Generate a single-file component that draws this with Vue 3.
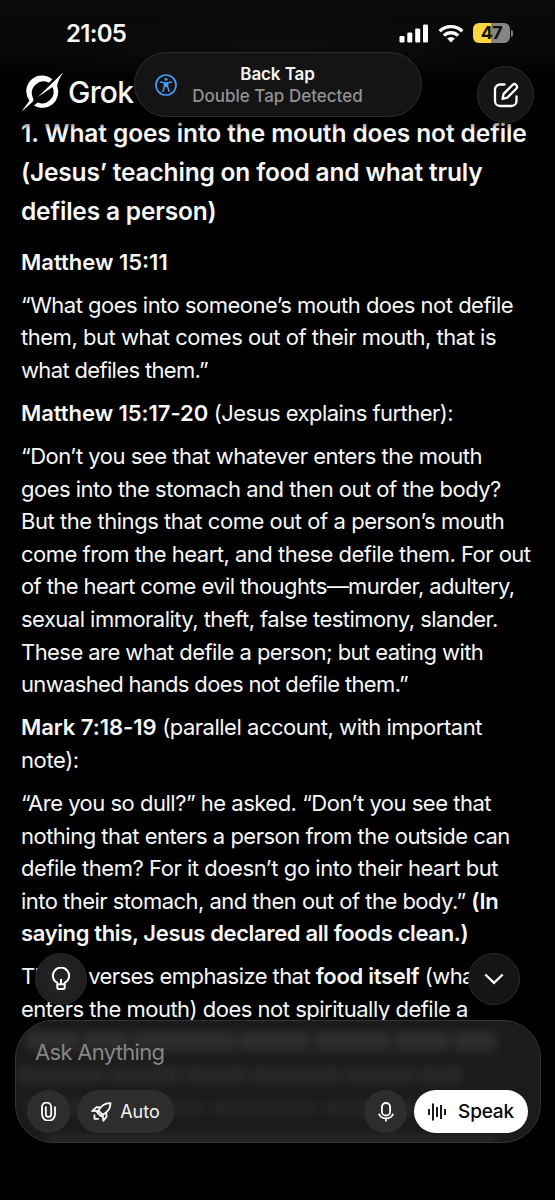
<template>
  <div class="screen">
    <!-- Conversation text -->
    <main class="article">
      <component
          :is="block.tag"
          v-for="(block, i) in blocks"
          :key="i"
          class="block"
          :class="block.tag === 'h2' ? 'heading' : 'para'"
      >
        <span v-for="(line, j) in block.lines" :key="j" class="line">
          <span
              v-for="(part, k) in line.parts"
              :key="k"
              :class="{ strong: part.bold }"
              :style="{ letterSpacing: (part.bold ? line.boldLs : line.ls) + 'px' }"
          >{{ part.text }}</span>
        </span>
      </component>
    </main>
    <div class="top-fade"></div>

    <!-- Status bar -->
    <header class="status">
      <span class="time">21:05</span>
      <div class="indicators">
        <svg class="signal" width="30" height="19" viewBox="0 0 30 19" fill="#fff">
          <rect x="0.5" y="12" width="5" height="6.5" rx="1.3"/>
          <rect x="8.3" y="8.6" width="5" height="9.9" rx="1.3"/>
          <rect x="16.2" y="4.5" width="5" height="14" rx="1.3"/>
          <rect x="24" y="0.5" width="5" height="18" rx="1.3"/>
        </svg>
        <svg class="wifi" width="26" height="19" viewBox="0 0 26 19" fill="none" stroke="#fff" stroke-width="3.4">
          <path d="M1.7 7.2a16.2 16.2 0 0 1 22.6 0"/>
          <path d="M5.9 11.6a10.2 10.2 0 0 1 14.2 0"/>
          <path d="M13 18.6l-3.9-4a5.6 5.6 0 0 1 7.8 0z" fill="#fff" stroke="none"/>
        </svg>
        <div class="battery"><span>47</span></div>
        <i class="nub"></i>
      </div>
    </header>

    <!-- Brand -->
    <div class="brand">
      <svg width="44" height="42" viewBox="0 0 44 42" fill="#fff">
        <path d="M32.4 8.4A15.8 15.8 0 0 0 9.4 29.8Q7 33 1.4 40.8L12.2 31.2Q14.2 29.300 12.900 26.800A11.6 11.6 0 0 1 28.8 11.8z"/>
        <path d="M14 34.6A16 16 0 0 0 37.200 15.200Q37 11.500 43 1.500L17.600 26.300L32.600 16A11.6 11.6 0 0 1 17.6 31.4z"/>
      </svg>
      <span>Grok</span>
    </div>

    <!-- System notification -->
    <div class="toast">
      <svg width="22" height="22" viewBox="0 0 22 22" fill="none" stroke="#459cf5" stroke-width="1.5" stroke-linecap="round">
        <circle cx="11" cy="11" r="10" stroke-width="1.7"/>
        <circle cx="11" cy="5.2" r="1.5" fill="#459cf5" stroke="none"/>
        <path d="M5.4 8l4 .8v3.6L8 17.3M16.600 8l-4 .8v3.6l1.400 4.900"/>
        <path d="M9.3 8.300h3.400v4.800H9.300z" fill="#459cf5" stroke="none"/>
      </svg>
      <div class="toast-text">
        <b>Back Tap</b>
        <span>Double Tap Detected</span>
      </div>
    </div>

    <button class="round compose">
      <svg width="28" height="28" viewBox="0 0 28 28" fill="none" stroke="#fff" stroke-width="2.3" stroke-linecap="round" stroke-linejoin="round">
        <path d="M12.5 3.5H8A5 5 0 0 0 3 8.5V20a5 5 0 0 0 5 5h11.5a5 5 0 0 0 5-5v-4.5"/>
        <path d="M10.5 17.8l1.1-4.9 8.9-8.9a2.6 2.6 0 0 1 3.7 3.7l-8.9 8.9z"/>
      </svg>
    </button>

    <button class="round bulb">
      <svg width="20" height="24" viewBox="0 0 20 24" fill="none" stroke="#fff" stroke-width="2" stroke-linejoin="round">
        <path d="M6.3 15.9A8.1 8.1 0 1 1 13.7 15.9V20.5a1.5 1.5 0 0 1-1.5 1.5H7.8a1.5 1.5 0 0 1-1.5-1.5zM6.3 17.2h7.4M10 12v5"/>
      </svg>
    </button>
    <button class="round down">
      <svg width="20" height="12" viewBox="0 0 20 12" fill="none" stroke="#fff" stroke-width="2.3">
        <path d="M1.3 1.5L10 9.8l8.7-8.3"/>
      </svg>
    </button>

    <!-- Prompt box -->
    <section class="composer">
      <!-- Soft smudges seen through the glass -->
      <svg class="glass" width="524" height="121" viewBox="0 0 524 121" fill="none" stroke="#fff">
        <path d="M10 20H480" stroke-width="20" stroke-dasharray="53 5 44 5 102 4 70 6 75 6" opacity="0.085"/>
        <path d="M2 54H446" stroke-width="17" stroke-dasharray="87 5 71 5 60 6" opacity="0.06"/>
        <path d="M10 87H400" stroke-width="16" stroke-dasharray="106 6 68 6" opacity="0.04"/>
        <path d="M30 119H480" stroke-width="7" opacity="0.09"/>
      </svg>
      <div class="placeholder">Ask Anything</div>
      <div class="actions">
        <button class="chip icon">
          <svg width="15" height="19" viewBox="0 0 15 19" fill="none" stroke="#fff" stroke-width="1.8">
            <path d="M4.8 4.5v7.7a2.7 2.7 0 0 0 5.4 0V5a4.2 4.2 0 0 0-9.2.2v7a6.5 6.5 0 0 0 13 0V4.5"/>
          </svg>
        </button>
        <button class="chip auto">
          <svg width="21" height="20" viewBox="0 0 21 20" fill="none" stroke="#fff" stroke-width="1.8" stroke-linejoin="round">
            <path d="M19.5 1.2c-5.5-.2-9.2 2-12 7.5l4.2 4.1c5.2-2.8 7.9-6.2 7.8-11.6zM9.3 5.500L5.500 5.200 1.200 9.100l6.300-.4M15.300 10.500l.2 4.300-3.100 4-.7-6M8 8.600l-1.800 1.700 4 4 1.500-1.500"/>
            <path d="M3.5 12.5v4.3h4.2"/>
          </svg>
          Auto
        </button>
        <button class="chip icon mic">
          <svg width="16" height="20" viewBox="0 0 16 20" fill="none" stroke="#fff" stroke-width="1.8">
            <rect x="3.9" y="1" width="8.2" height="12.5" rx="4.1"/>
            <path d="M1 11.7a7.1 5.7 0 0 0 14 0M8 16.2V19.5"/>
          </svg>
        </button>
        <button class="speak">
          <svg width="18" height="18" viewBox="0 0 18 18" stroke="#000" stroke-width="1.8">
            <path d="M1 6v6M5 .5v17M9 4v10M13 2v14M17 6v6"/>
          </svg>
          Speak
        </button>
      </div>
    </section>
  </div>
</template>

<script setup>
// Builds one line of text; **double stars** mark the bold run
const line = (raw, ls = -0.5, boldLs = -0.3) => ({
  ls,
  boldLs,
  parts: raw.split('**').map((text, i) => ({text, bold: i % 2 === 1})).filter(p => p.text)
})

const blocks = [
  {
    tag: 'h2',
    lines: [
      line('1. What goes into the mouth does not defile', -0.1),
      line('(Jesus’ teaching on food and what truly', -0.17),
      line('defiles a person)', -0.18)
    ]
  },
  {tag: 'p', lines: [line('**Matthew 15:11**', 0, 0)]},
  {
    tag: 'p',
    lines: [
      line('“What goes into someone’s mouth does not defile', -0.51),
      line('them, but what comes out of their mouth, that is', -0.48),
      line('what defiles them.”', -0.66)
    ]
  },
  {tag: 'p', lines: [line('**Matthew 15:17-20** (Jesus explains further):', -0.55, -0.05)]},
  {
    tag: 'p',
    lines: [
      line('“Don’t you see that whatever enters the mouth', -0.49),
      line('goes into the stomach and then out of the body?', -0.51),
      line('But the things that come out of a person’s mouth', -0.45),
      line('come from the heart, and these defile them. For out', -0.51),
      line('of the heart come evil thoughts—murder, adultery,', -0.6),
      line('sexual immorality, theft, false testimony, slander.', -0.53),
      line('These are what defile a person; but eating with', -0.56),
      line('unwashed hands does not defile them.”', -0.65)
    ]
  },
  {
    tag: 'p',
    lines: [
      line('**Mark 7:18-19** (parallel account, with important', -0.48, -0.05),
      line('note):', -0.4)
    ]
  },
  {
    tag: 'p',
    lines: [
      line('“Are you so dull?” he asked. “Don’t you see that', -0.5),
      line('nothing that enters a person from the outside can', -0.51),
      line('defile them? For it doesn’t go into their heart but', -0.45),
      line('into their stomach, and then out of the body.” **(In**', -0.53),
      line('**saying this, Jesus declared all foods clean.)**', 0, -0.36)
    ]
  },
  {
    tag: 'p',
    lines: [
      line('These verses emphasize that **food itself** (what', -0.57),
      line('enters the mouth) does not spiritually defile a', -0.5)
    ]
  }
]
</script>

<style>
body {
  background: #000;
}
</style>

<style scoped>
.screen {
  position: relative;
  width: 555px;
  height: 1200px;
  overflow: hidden;
  background: #000;
  color: #f7f7f7;
  font-family: Inter, "Liberation Sans", sans-serif;
}

.article {
  padding: 114px 0 0 21px;
}

.block {
  margin: 0 0 10.5px;
  font-weight: 400;
}

.heading {
  margin-bottom: 14.5px;
  font-size: 24.5px;
  line-height: 39px;
  font-weight: 600;
}

.para {
  font-size: 22px;
  line-height: 32.6px;
}

.line {
  display: block;
  white-space: pre;
}

.strong {
  font-weight: 600;
}

.top-fade {
  position: absolute;
  inset: 0 0 auto;
  height: 130px;
  background:
    radial-gradient(ellipse 260px 50px at 50% 60px, rgba(255, 255, 255, 0.02), transparent),
    linear-gradient(#0a0a0a 0, #080808 50px, #000 82px, rgba(0, 0, 0, 0.7) 118px, transparent 130px);
}

.status {
  position: absolute;
  inset: 0 0 auto;
  height: 66px;
  display: flex;
  align-items: center;
  justify-content: space-between;
  padding: 0 42px 0 66px;
  box-sizing: border-box;
}

.time {
  font-size: 24px;
  font-weight: 600;
  letter-spacing: -0.7px;
}

.indicators {
  display: flex;
  align-items: center;
}

.wifi {
  margin: 0 9px;
}

.battery {
  width: 37px;
  height: 20px;
  border-radius: 6px;
  background: linear-gradient(90deg, #fbd63f 48%, #858585 48%);
  color: #111;
  font-size: 18px;
  line-height: 20px;
  font-weight: 700;
  letter-spacing: -0.5px;
  text-align: center;
}

.nub {
  width: 2px;
  height: 7px;
  margin-left: 1px;
  border-radius: 0 2px 2px 0;
  background: #777;
}

.brand {
  position: absolute;
  left: 20px;
  top: 71px;
  display: flex;
  align-items: center;
  gap: 4px;
  font-size: 30px;
  font-weight: 500;
  letter-spacing: -0.8px;
}

.toast {
  position: absolute;
  left: 134px;
  top: 52px;
  width: 288px;
  height: 65px;
  box-sizing: border-box;
  border: 1px solid #2d2d2d;
  border-radius: 33px;
  background: #141414;
  display: flex;
  align-items: center;
  padding-left: 20px;
}

.toast-text {
  display: flex;
  flex-direction: column;
  align-items: center;
  width: 201px;
  font-size: 17px;
  line-height: 22px;
  color: #929292;
  font-weight: 500;
}

.toast-text b {
  color: #f5f5f5;
  font-weight: 600;
  letter-spacing: -0.1px;
}

button {
  padding: 0;
  border: 0;
  color: #f5f5f5;
  font: inherit;
  display: flex;
  align-items: center;
  justify-content: center;
}

.round {
  position: absolute;
  box-sizing: border-box;
  border: 1px solid #2b2b2b;
  border-radius: 50%;
  background: #151515;
}

.compose {
  left: 477px;
  top: 66px;
  width: 57px;
  height: 57px;
}

.bulb,
.down {
  top: 953px;
  width: 52px;
  height: 52px;
}

.bulb {
  left: 35px;
  background: radial-gradient(#262626, #1b1b1b);
}

.down {
  left: 468px;
}

.composer {
  position: absolute;
  left: 15px;
  top: 1020px;
  width: 526px;
  height: 123px;
  box-sizing: border-box;
  border: 1px solid #343434;
  border-radius: 38px;
  background: #1b1b1b;
  padding: 15px 12px 0 11px;
  overflow: hidden;
}

.glass {
  position: absolute;
  left: 0;
  top: 0;
  filter: blur(5px);
}

.placeholder {
  position: relative;
  padding-left: 8px;
  font-size: 22px;
  line-height: 32px;
  letter-spacing: -0.7px;
  color: #868686;
}

.actions {
  position: relative;
  display: flex;
  margin-top: 22px;
}

.chip {
  height: 43px;
  border-radius: 22px;
  background: #2d2d2d;
}

.icon {
  width: 43px;
}

.auto {
  width: 97px;
  margin-left: 7px;
  gap: 8px;
  font-size: 18px;
}

.mic {
  margin-left: auto;
  margin-right: 7px;
}

.speak {
  width: 114px;
  height: 43px;
  border-radius: 22px;
  background: #fff;
  color: #080808;
  gap: 12px;
  font-size: 19px;
  font-weight: 500;
  letter-spacing: -0.2px;
}
</style>
